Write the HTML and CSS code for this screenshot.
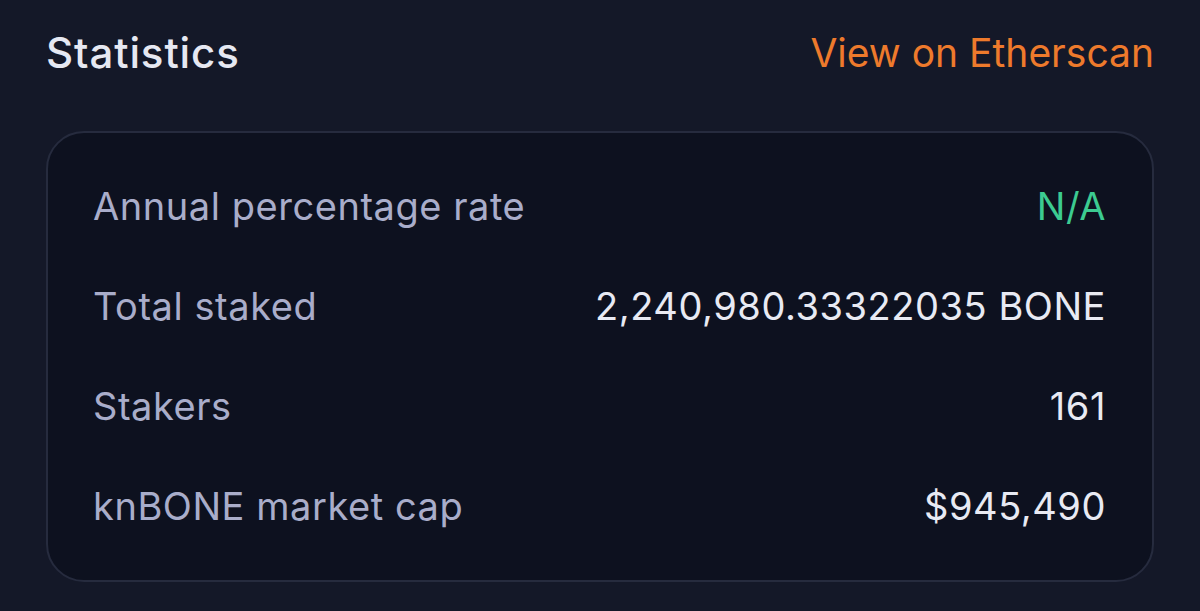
FILE: index.html
```html
<!DOCTYPE html>
<html>
<head>
<meta charset="utf-8">
<link rel="stylesheet" href="styles.css">
</head>
<body>
<section class="stats">
  <header class="stats-head">
    <h2 class="stats-title">Statistics</h2>
    <a class="stats-link" href="#">View on Etherscan</a>
  </header>
  <div class="card">
    <div class="row"><span class="label">Annual percentage rate</span><span class="value green">N/A</span></div>
    <div class="row"><span class="label">Total staked</span><span class="value">2,240,980.33322035 BONE</span></div>
    <div class="row"><span class="label">Stakers</span><span class="value">161</span></div>
    <div class="row"><span class="label">knBONE market cap</span><span class="value">$945,490</span></div>
  </div>
</section>
</body>
</html>
```
FILE: styles.css
```css
html, body {
  margin: 0;
  padding: 0;
  background: #141828;
  height: 100%;
}
body {
  font-family: Inter, "Noto Sans", sans-serif;
  overflow: hidden;
}
.stats {
  padding: 26px 46px 0 46px;
}
.stats-head {
  display: flex;
  justify-content: space-between;
  align-items: center;
  height: 52px;
}
.stats-title {
  margin: 0;
  font-size: 42px;
  font-weight: 500;
  color: #e6e8f2;
  letter-spacing: 0.9px;
}
.stats-link {
  font-size: 39px;
  font-weight: 400;
  color: #ee7a2c;
  text-decoration: none;
}
.card {
  margin-top: 53px;
  border: 2px solid #262b3e;
  border-radius: 38px;
  background: #0d111f;
  padding: 48px 46px 50px 45px;
  display: flex;
  flex-direction: column;
  gap: 51px;
}
.row {
  display: flex;
  justify-content: space-between;
  align-items: center;
  height: 49px;
  font-size: 38px;
  letter-spacing: 0.55px;
}
.label {
  color: #a9adca;
}
.value {
  color: #e8eaf3;
}
.value.green {
  color: #3ccb91;
}
```
